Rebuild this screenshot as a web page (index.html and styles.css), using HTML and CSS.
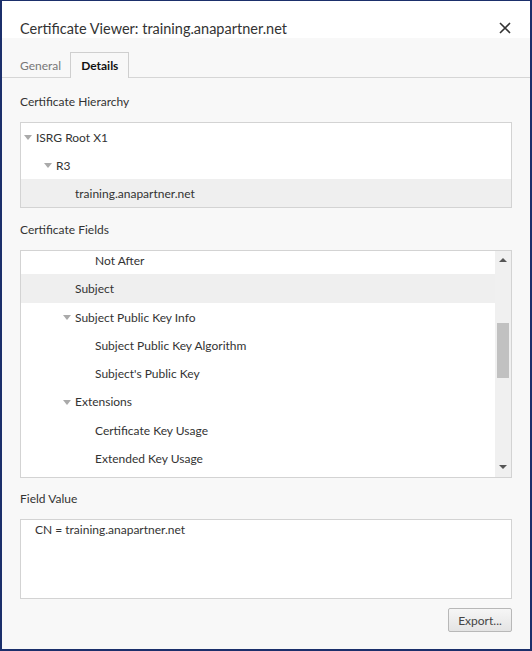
FILE: index.html
```html
<!DOCTYPE html>
<html>
<head>
<meta charset="utf-8">
<link rel="stylesheet" href="styles.css">
</head>
<body>
<div class="window">
  <div class="titlebar">
    <div class="title">Certificate Viewer: training.anapartner.net</div>
    <svg class="close" width="12" height="12" viewBox="0 0 12 12"><path d="M1 1 L11 11 M11 1 L1 11" stroke="#333" stroke-width="1.6" fill="none"/></svg>
  </div>
  <div class="tabs">
    <div class="tab">General</div>
    <div class="tab active">Details</div>
  </div>
  <div class="content">
    <div class="label first">Certificate Hierarchy</div>
    <div class="box hierarchy">
      <div class="row l0"><span class="tri"></span>ISRG Root X1</div>
      <div class="row l1"><span class="tri"></span>R3</div>
      <div class="row l2 sel">training.anapartner.net</div>
    </div>
    <div class="label second">Certificate Fields</div>
    <div class="box fields">
      <div class="list">
        <div class="inner">
          <div class="row f3">Not After</div>
          <div class="row f2 sel">Subject</div>
          <div class="row f2"><span class="tri"></span>Subject Public Key Info</div>
          <div class="row f3">Subject Public Key Algorithm</div>
          <div class="row f3">Subject's Public Key</div>
          <div class="row f2"><span class="tri"></span>Extensions</div>
          <div class="row f3">Certificate Key Usage</div>
          <div class="row f3">Extended Key Usage</div>
        </div>
      </div>
      <div class="scrollbar">
        <span class="arrow up"></span>
        <div class="track"><div class="thumb"></div></div>
        <span class="arrow down"></span>
      </div>
    </div>
    <div class="label third">Field Value</div>
    <div class="box value"><span class="value-text">CN = training.anapartner.net</span></div>
    <div class="actions"><button class="btn">Export...</button></div>
  </div>
</div>
</body>
</html>
```
FILE: styles.css
```css
html, body { margin: 0; padding: 0; }
body { width: 532px; height: 651px; font-family: "Lato", "Noto Sans", sans-serif; color: #333; font-size: 12px; }
.window { box-sizing: border-box; width: 532px; height: 651px; border: 2px solid #1b2f6b; border-top-width: 1px; background: #f8f8f8; display: flex; flex-direction: column; }
.titlebar { background: #fff; height: 37px; flex: none; display: flex; align-items: center; justify-content: space-between; padding: 17px 19px 0 18px; box-sizing: border-box; }
.title { font-size: 14.5px; color: #333; }
.tabs { display: flex; align-items: flex-end; height: 40px; flex: none; border-bottom: 1px solid #d6d6d6; padding-left: 12px; box-sizing: border-box; }
.tab { height: 24px; line-height: 25px; padding: 0 6px; color: #777; font-size: 12px; }
.tab.active { color: #111; font-weight: bold; border: 1px solid #cfcfcf; border-bottom: none; background: #f8f8f8; margin-bottom: -1px; height: 25px; padding: 0 10px; margin-left: 3px; }
.content { padding: 0 18px; display: flex; flex-direction: column; }
.label { height: 20px; line-height: 20px; }
.label.first { margin-top: 14px; }
.label.second { margin-top: 12px; }
.label.third { margin-top: 11px; }
.box { background: #fff; border: 1px solid #d3d3d3; box-sizing: border-box; }
.hierarchy { margin-top: 10px; height: 86px; }
.row { height: 28px; line-height: 29px; white-space: nowrap; }
.row.sel { background: #efefef; }
.tri { display: inline-block; width: 0; height: 0; border-left: 4px solid transparent; border-right: 4px solid transparent; border-top: 5px solid #aaa; vertical-align: middle; margin-right: 4px; margin-top: -2px; }
.hierarchy .l0 { padding-left: 3px; }
.hierarchy .l1 { padding-left: 23px; }
.hierarchy .l2 { padding-left: 54px; }
.fields { margin-top: 10px; height: 228px; display: flex; }
.fields .row { height: 28.3px; }
.list { flex: 1; overflow: hidden; }
.inner { margin-top: -5px; }
.fields .f2 { padding-left: 54px; }
.fields .f2 .tri { margin-left: -12px; }
.fields .f3 { padding-left: 74px; }
.scrollbar { width: 16px; background: #f0f0f0; display: flex; flex-direction: column; align-items: center; }
.arrow { width: 0; height: 0; border-left: 4px solid transparent; border-right: 4px solid transparent; }
.arrow.up { border-bottom: 4px solid #555; margin-top: 7px; }
.arrow.down { border-top: 4px solid #555; margin-bottom: 8px; }
.track { flex: 1; width: 100%; padding-top: 61px; box-sizing: border-box; display: flex; justify-content: center; }
.thumb { width: 12px; height: 55px; background: #c1c1c1; }
.value { margin-top: 10px; height: 80px; padding: 1px 0 0 14px; line-height: 18px; }
.value-text { display: block; }
.actions { display: flex; justify-content: flex-end; margin-top: 9px; }
.btn { width: 64px; height: 24px; font-family: inherit; font-size: 12px; color: #444; border: 1px solid #b8b8b8; border-radius: 2px; background: linear-gradient(#f6f6f6, #e4e4e4); padding: 0; }
```
